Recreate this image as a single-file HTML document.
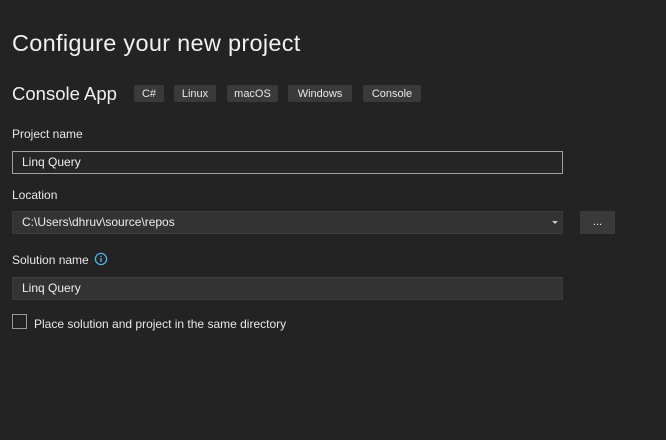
<!DOCTYPE html><html><head><style>
body{margin:0;width:666px;height:440px;background:#232323;font-family:"Liberation Sans",sans-serif;color:#f0f0f0;position:relative;overflow:hidden}
.a{position:absolute;white-space:nowrap}
.tag{position:absolute;top:85px;height:17px;background:#3a3a3a;border-radius:2px;font-size:11px;line-height:18px;text-align:center;color:#e8e8e8}
.lbl{font-size:12px;color:#e8e8e8}
.in{position:absolute;left:12px;width:551px;height:23px;background:#333;box-sizing:border-box;font-size:12px;line-height:23px;padding-left:9px;color:#eee;border:1px solid #3c3c3c}
</style></head><body>
<div class="a" style="left:12px;top:30px;font-size:23.5px;letter-spacing:0.3px">Configure your new project</div>
<div class="a" style="left:12px;top:83px;font-size:18.5px">Console App</div>
<div class="tag" style="left:134px;width:30px">C#</div>
<div class="tag" style="left:174px;width:42px">Linux</div>
<div class="tag" style="left:227px;width:51px">macOS</div>
<div class="tag" style="left:288px;width:64px">Windows</div>
<div class="tag" style="left:363px;width:58px">Console</div>
<div class="a lbl" style="left:12px;top:127px">Project name</div>
<div class="in" style="top:151px;background:#262626;border-color:#a0a0a0;line-height:21px">Linq Query</div>
<div class="a lbl" style="left:12px;top:188px">Location</div>
<div class="in" style="top:211px;line-height:21px">C:\Users\dhruv\source\repos<span style="position:absolute;right:4px;top:9px;width:0;height:0;border-left:3px solid transparent;border-right:3px solid transparent;border-top:3px solid #ccc"></span></div>
<div class="a" style="left:580px;top:211px;width:35px;height:23px;background:#3a3a3a;font-size:11px;line-height:23px;text-align:center">...</div>
<div class="a lbl" style="left:12px;top:253px">Solution name</div>
<svg class="a" style="left:94px;top:252px" width="14" height="14"><circle cx="7" cy="7" r="5.6" fill="none" stroke="#4fb4e8" stroke-width="1.3"/><rect x="6.3" y="6" width="1.4" height="4" fill="#4fb4e8"/><rect x="6.3" y="3.8" width="1.4" height="1.3" fill="#4fb4e8"/></svg>
<div class="in" style="top:277px;line-height:21px">Linq Query</div>
<div class="a" style="left:12px;top:314px;width:15px;height:15px;box-sizing:border-box;border:1px solid #999"></div>
<div class="a lbl" style="left:34px;top:317px">Place solution and project in the same directory</div>
</body></html>
